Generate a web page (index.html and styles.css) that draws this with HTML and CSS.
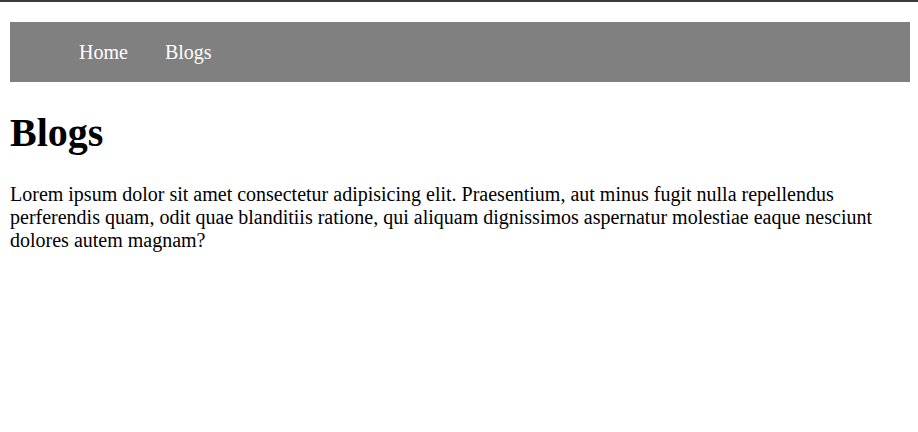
FILE: index.html
```html
<!DOCTYPE html>
<html lang="en">
<head>
<meta charset="UTF-8">
<title>Blogs</title>
<link rel="stylesheet" href="styles.css">
</head>
<body>
<div class="topline"></div>
<div class="page">
  <nav class="navbar">
    <ul class="nav-list">
      <li><a class="nav-link" href="#">Home</a></li>
      <li><a class="nav-link" href="#">Blogs</a></li>
    </ul>
  </nav>
  <h1 class="title">Blogs</h1>
  <p class="text">Lorem ipsum dolor sit amet consectetur adipisicing elit. Praesentium, aut minus fugit nulla repellendus perferendis quam, odit quae blanditiis ratione, qui aliquam dignissimos aspernatur molestiae eaque nesciunt dolores autem magnam?</p>
</div>
</body>
</html>
```
FILE: styles.css
```css
html, body {
  margin: 0;
  padding: 0;
  background: #fff;
}
body {
  font-family: "Liberation Serif", "Times New Roman", serif;
  font-size: 20px;
  color: #000;
}
.topline {
  height: 2px;
  background: #3c3c3c;
}
.page {
  padding: 20px 8px 0 10px;
}
.navbar {
  background: #808080;
  height: 60px;
  display: flex;
  align-items: center;
}
.nav-list {
  list-style: none;
  margin: 0;
  padding: 1px 0 0 69px;
  display: flex;
  gap: 37px;
}
.nav-link {
  color: #fff;
  text-decoration: none;
}
.title {
  font-size: 40px;
  margin: 26.8px 0;
  font-weight: bold;
}
.text {
  margin: 0;
  font-size: 20px;
  line-height: 23px;
}
```
